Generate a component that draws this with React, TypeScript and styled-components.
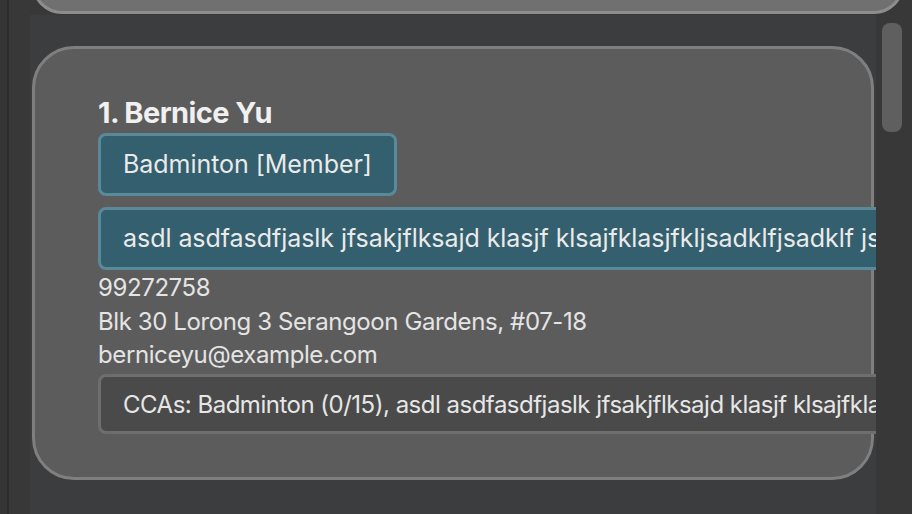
import React from "react";
import styled, { createGlobalStyle } from "styled-components";

const GlobalStyle = createGlobalStyle`
  html, body {
    margin: 0;
    padding: 0;
    background: #383838;
    overflow: hidden;
  }
  body {
    font-family: Inter, "Noto Sans", "Liberation Sans", sans-serif;
  }
`;

const Window = styled.div`
  display: flex;
  width: 912px;
  height: 514px;
  background: #383838;
  overflow: hidden;
`;

const SideStrip = styled.div`
  width: 30px;
  flex: none;
  display: flex;
  background: #383838;
`;

const SideEdge = styled.div`
  width: 7px;
  background: #353535;
  border-right: 2px solid #2c2c2c;
`;

const Main = styled.div`
  flex: 1;
  display: flex;
  flex-direction: column;
  min-width: 0;
`;

const PeekCard = styled.div`
  flex: none;
  height: 60px;
  margin-top: -46px;
  margin-left: 2px;
  margin-right: 8px;
  box-sizing: border-box;
  border: 3px solid #8d8d8d;
  border-radius: 40px;
  background: #707070;
`;

const Body = styled.div`
  flex: 1;
  display: flex;
  margin-top: 1px;
  min-height: 0;
`;

const ListViewport = styled.div`
  width: 846px;
  flex: none;
  background: #3c3d3f;
  overflow: hidden;
  padding-top: 31px;
  box-sizing: border-box;
`;

const ScrollTrack = styled.div`
  flex: 1;
  background: #383838;
  padding: 8px 10px 0 6px;
`;

const ScrollThumb = styled.div`
  height: 109px;
  border-radius: 8px;
  background: #5f5f5f;
`;

const Card = styled.div`
  width: 842px;
  margin-left: 2px;
  box-sizing: border-box;
  border: 3px solid #7f7f7f;
  border-radius: 42px;
  background: #5c5c5c;
  padding: 47px 0 43px 63px;
  display: flex;
  flex-direction: column;
  gap: 2px;
`;

const Name = styled.div`
  font-size: 29px;
  line-height: 34px;
  font-weight: 700;
  letter-spacing: -0.6px;
  color: #f0f0f0;
`;

const TagList = styled.div`
  display: flex;
  flex-direction: column;
  align-items: flex-start;
  gap: 11px;
  margin-top: 1px;
`;

const Tag = styled.div`
  box-sizing: border-box;
  height: 63px;
  border: 3px solid #5a8a99;
  border-radius: 8px;
  background: #335f6e;
  padding: 0 22px;
  display: flex;
  align-items: center;
  white-space: nowrap;
  font-size: 25px;
  line-height: 29px;
  color: #eaeaea;
  letter-spacing: -0.05px;
`;

const Field = styled.div`
  font-size: 24px;
  line-height: 31.5px;
  color: #e4e4e4;
  white-space: nowrap;
  letter-spacing: -0.4px;
`;

const CcaBox = styled.div`
  box-sizing: border-box;
  height: 60px;
  width: 1200px;
  margin-top: 1.5px;
  border: 3px solid #6e6e6e;
  border-radius: 8px;
  background: #4a4a4a;
  padding: 0 22px;
  display: flex;
  align-items: center;
  white-space: nowrap;
  font-size: 24px;
  line-height: 29px;
  color: #e6e6e6;
  letter-spacing: -0.5px;
`;

const longTag =
  "asdl asdfasdfjaslk jfsakjflksajd klasjf klsajfklasjfkljsadklfjsadklf jsadklfjsadkl";

export default function App() {
  return (
    <>
      <GlobalStyle />
      <Window>
        <SideStrip>
          <SideEdge />
        </SideStrip>
        <Main>
          <PeekCard />
          <Body>
            <ListViewport>
              <Card>
                <Name>1. Bernice Yu</Name>
                <TagList>
                  <Tag>Badminton [Member]</Tag>
                  <Tag>{longTag}</Tag>
                </TagList>
                <Field>99272758</Field>
                <Field>Blk 30 Lorong 3 Serangoon Gardens, #07-18</Field>
                <Field>berniceyu@example.com</Field>
                <CcaBox>
                  CCAs: Badminton (0/15), asdl asdfasdfjaslk jfsakjflksajd klasjf
                  klsajfklasjfkljsadklfjsadklf jsadklfjsadkl (0/0)
                </CcaBox>
              </Card>
            </ListViewport>
            <ScrollTrack>
              <ScrollThumb />
            </ScrollTrack>
          </Body>
        </Main>
      </Window>
    </>
  );
}
